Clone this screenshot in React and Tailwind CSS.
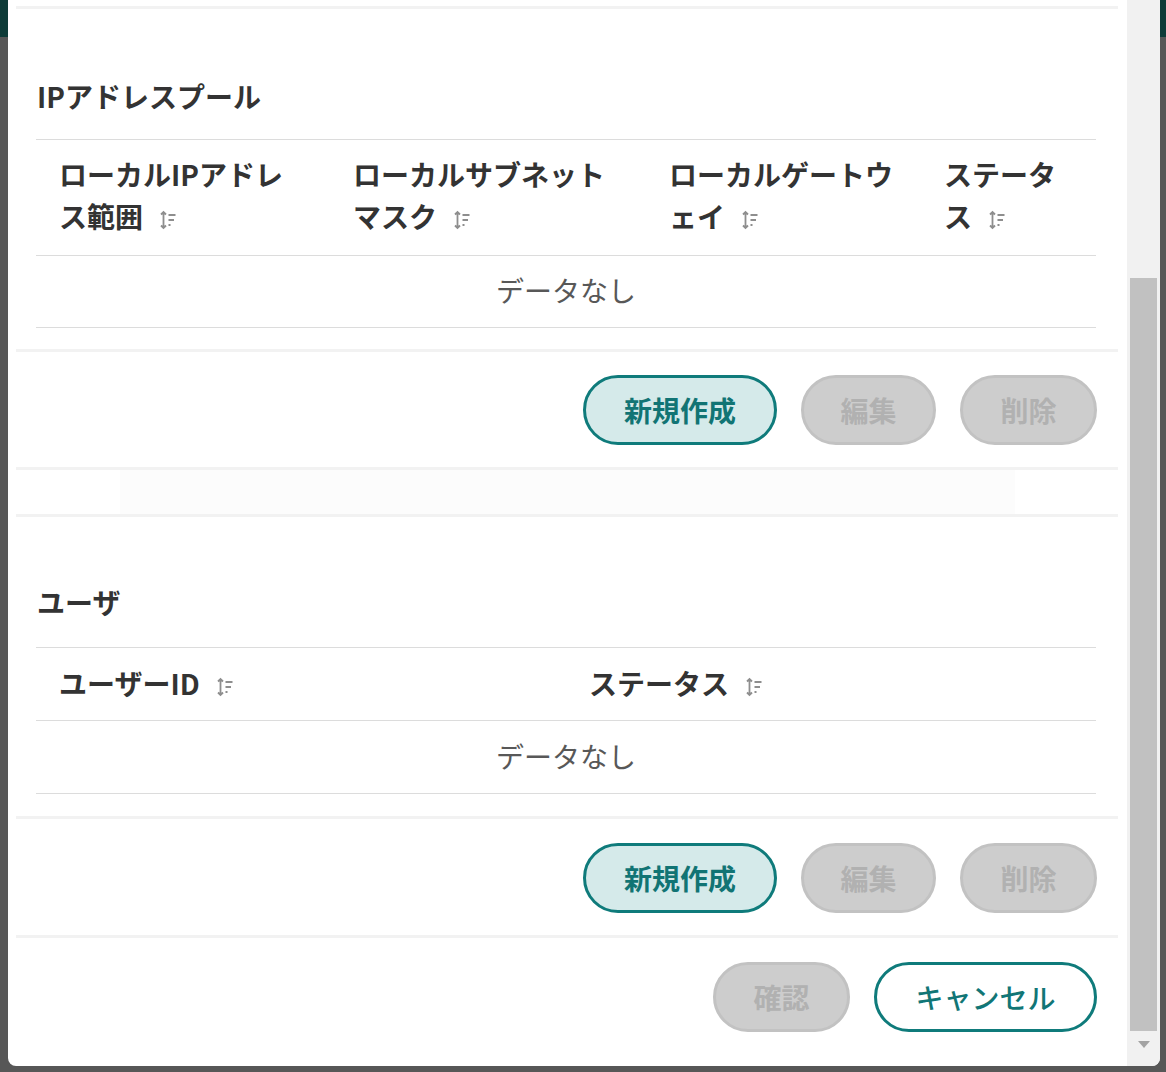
import React from "react";

const SortIcon = () => (
  <svg
    className="ml-4 inline-block h-[20px] w-[18px] align-[-2px]"
    viewBox="0 0 18 20"
    fill="none"
    stroke="#8e8e8e"
    strokeWidth="1.8"
  >
    <path d="M4.5 2v16M2 4.5L4.5 2 7 4.5M2 15.5L4.5 18 7 15.5" />
    <path d="M9.5 5h7M9.5 10h5.5M9.5 15h2" />
  </svg>
);

const Divider = () => <div className="ml-2 mr-[9px] h-[3px] bg-[#f2f2f2]" />;

const Btn = ({ children, variant = "off", className = "" }) => {
  const styles = {
    primary: "border-[#0f7b7b] bg-[#d5eaea] text-[#117474] font-bold",
    off: "border-[#c2c2c2] bg-[#cdcdcd] text-[#b1b1b1] font-bold",
    outline: "border-[#0f7b7b] bg-white text-[#117676] font-medium",
  };
  return (
    <button
      className={`flex h-[70px] items-center justify-center rounded-full border-[3px] text-[28px] ${styles[variant]} ${className}`}
    >
      {children}
    </button>
  );
};

const ActionRow = () => (
  <div className="mr-[30px] flex justify-end gap-6">
    <Btn variant="primary" className="w-[194px]">新規作成</Btn>
    <Btn className="w-[135px]">編集</Btn>
    <Btn className="w-[137px]">削除</Btn>
  </div>
);

const Empty = ({ tall }) => (
  <div
    className={`flex ${tall ? "h-[73px]" : "h-[72px]"} items-center justify-center border-b border-[#dcdcdc] pb-[3px] text-[28px] text-[#585858]`}
  >
    データなし
  </div>
);

export default function App() {
  return (
    <div className="flex h-[1072px] w-[1166px] overflow-hidden bg-[#575757] font-['Noto_Sans_CJK_JP','Noto_Sans',sans-serif] text-[#333]">
      <div className="w-2 shrink-0">
        <div className="h-[37px] bg-[#0e3b38]" />
      </div>

      <div className="flex h-[1066px] w-[1152px] shrink-0 overflow-hidden rounded-b-lg bg-white">
        <main className="w-[1119px] shrink-0">
          <div className="h-[6px]" />
          <Divider />

          <h2 className="ml-[29px] mt-[67px] h-10 text-[28px] font-semibold leading-10 text-[#333]">
            IPアドレスプール
          </h2>

          <div className="ml-7 mr-[31px] mt-[23px] border-t border-[#dcdcdc]">
            <div className="flex border-b border-[#dcdcdc] text-[28px] font-semibold leading-[42px]">
              <div className="w-[294px] px-[23px] pb-[18px] pt-[13px]">
                ローカルIPアドレ
                <br />
                ス範囲
                <SortIcon />
              </div>
              <div className="w-[316px] px-[23px] pb-[18px] pt-[13px]">
                ローカルサブネット
                <br />
                マスク
                <SortIcon />
              </div>
              <div className="w-[275px] px-[23px] pb-[18px] pt-[13px]">
                ローカルゲートウ
                <br />
                ェイ
                <SortIcon />
              </div>
              <div className="w-[175px] px-[23px] pb-[18px] pt-[13px]">
                ステータ
                <br />
                ス
                <SortIcon />
              </div>
            </div>
            <Empty />
          </div>

          <div className="mt-[21px]">
            <Divider />
          </div>
          <div className="mt-[23px]">
            <ActionRow />
          </div>
          <div className="mt-[22px]">
            <Divider />
          </div>
          <div className="flex h-[44px] justify-start">
            <div className="ml-[112px] h-full w-[895px] bg-[#fcfcfc]" />
          </div>
          <Divider />

          <h2 className="ml-[29px] mt-[65px] h-10 text-[28px] font-semibold leading-10 text-[#333]">
            ユーザ
          </h2>

          <div className="ml-7 mr-[31px] mt-[25px] border-t border-[#dcdcdc]">
            <div className="flex h-[73px] items-center border-b border-[#dcdcdc] pb-[3px] text-[28px] font-semibold">
              <div className="w-[530px] px-[23px]">
                ユーザーID
                <SortIcon />
              </div>
              <div className="w-[530px] px-[23px]">
                ステータス
                <SortIcon />
              </div>
            </div>
            <Empty tall />
          </div>

          <div className="mt-[22px]">
            <Divider />
          </div>
          <div className="mt-6">
            <ActionRow />
          </div>
          <div className="mt-[22px]">
            <Divider />
          </div>

          <div className="mr-[30px] mt-6 flex justify-end gap-6">
            <Btn className="w-[137px]">確認</Btn>
            <Btn variant="outline" className="w-[223px]">キャンセル</Btn>
          </div>
        </main>

        <aside className="flex w-[33px] shrink-0 flex-col bg-[#f1f1f1]">
          <div className="h-[278px]" />
          <div className="mx-[3px] h-[753px] bg-[#c1c1c1]" />
          <div className="flex flex-1 items-center justify-center pb-2">
            <svg width="12" height="7" viewBox="0 0 12 7">
              <path d="M0 0h12L6 7z" fill="#a3a3a3" />
            </svg>
          </div>
        </aside>
      </div>

      <div className="w-[6px] shrink-0">
        <div className="h-[37px] bg-[#0e3b38]" />
      </div>
    </div>
  );
}
